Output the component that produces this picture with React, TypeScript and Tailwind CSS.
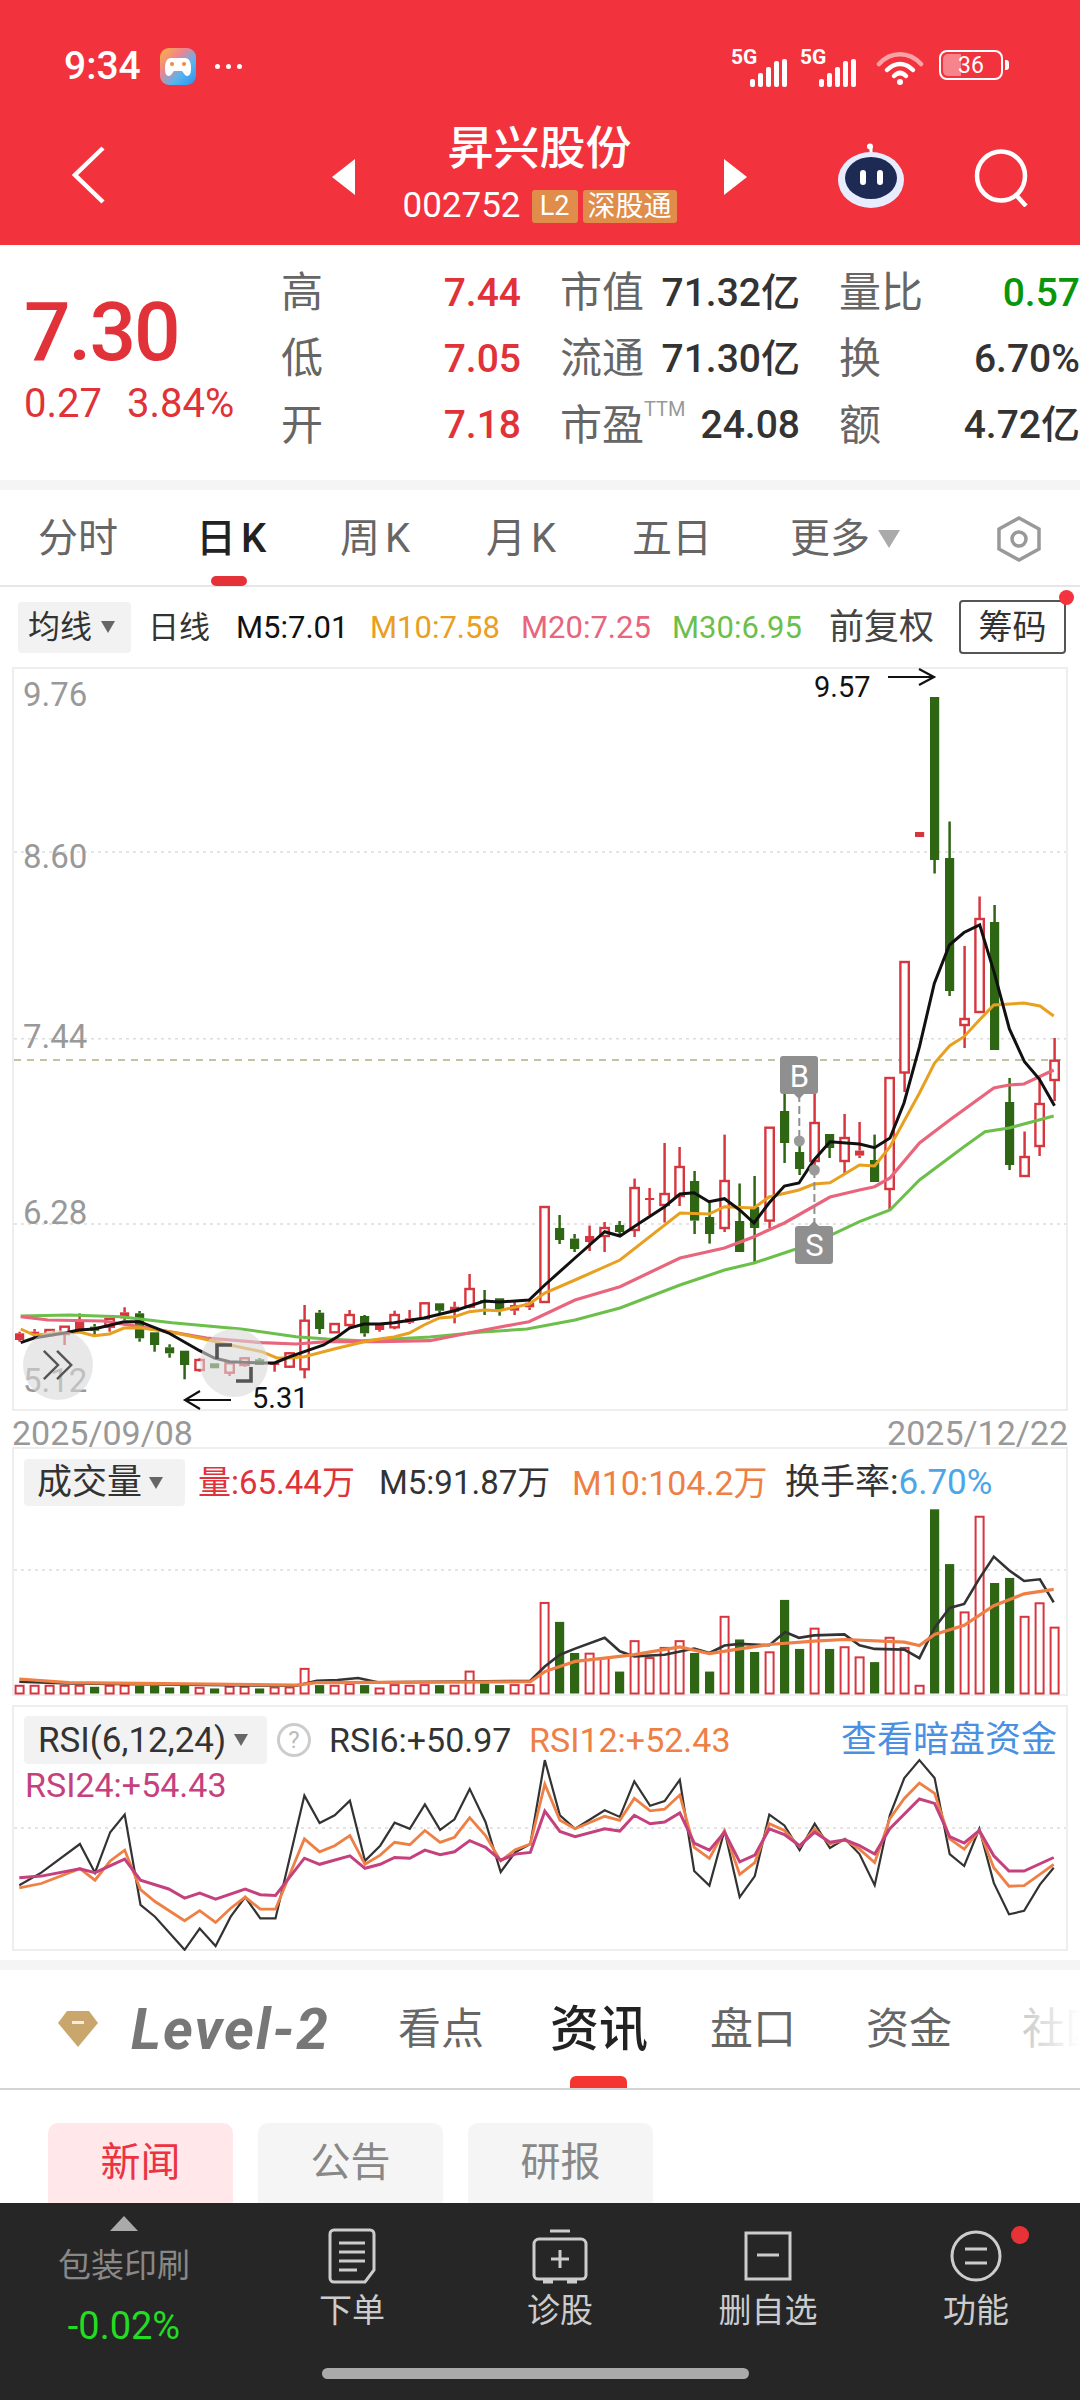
// daily K-line page of a stock app
type Candle = [string, number, number, number, number]

// type, high, body top, body bottom, low (page y)
const candles: Candle[] = [
  ['f', 1331.7, 1333.3, 1340, 1341.7], ['f', 1329, 1331.7, 1334.3, 1337.3], ['r', 1329.3, 1330, 1335, 1336], ['r', 1326.7, 1326.7, 1334, 1345],
  ['f', 1313.3, 1321.7, 1330, 1331.7], ['g', 1324, 1326.7, 1330.7, 1335], ['r', 1318.3, 1319, 1326.7, 1331.7], ['f', 1307.3, 1312.3, 1318.3, 1320],
  ['g', 1311, 1313.3, 1338.3, 1341.7], ['g', 1332.3, 1332.3, 1345, 1351.7], ['g', 1344.3, 1347.3, 1353.3, 1357.7], ['g', 1350.7, 1350.7, 1365, 1379.3],
  ['r', 1358.3, 1360, 1370, 1371.7], ['g', 1363.3, 1363.3, 1368.3, 1368.3], ['r', 1361.7, 1363.3, 1372.7, 1376], ['r', 1357, 1358.3, 1365, 1366.7],
  ['g', 1358, 1359.3, 1365, 1365], ['f', 1362.3, 1362.3, 1365, 1371.7], ['r', 1352.3, 1353.3, 1366.7, 1367.7], ['r', 1305, 1320.7, 1369.3, 1378.3],
  ['g', 1310, 1312.7, 1329, 1334], ['r', 1324, 1324, 1332.3, 1332.3], ['r', 1310, 1315, 1325, 1327.3], ['g', 1315, 1316, 1333.3, 1336.7],
  ['f', 1323.3, 1325, 1330, 1331.7], ['r', 1310.7, 1315, 1327.3, 1329.3], ['f', 1310, 1318.3, 1322.7, 1324], ['r', 1302.3, 1303.3, 1318.3, 1318.3],
  ['g', 1303.3, 1303.3, 1310.7, 1315], ['f', 1301.7, 1306.7, 1311.7, 1323.3], ['r', 1274, 1289, 1306.7, 1308.3], ['g', 1290, 1300.3, 1301.7, 1315],
  ['g', 1298.3, 1298.3, 1310.7, 1315.7], ['f', 1301.7, 1305, 1310.7, 1315], ['f', 1300, 1302.7, 1307.3, 1310], ['r', 1207, 1207, 1302, 1302],
  ['g', 1215, 1228, 1240, 1244], ['g', 1234, 1238.6, 1249, 1252], ['f', 1225.6, 1236, 1242, 1251], ['r', 1222, 1228, 1236, 1252],
  ['g', 1221, 1225, 1232, 1236], ['r', 1178.6, 1188, 1230, 1237], ['f', 1188, 1198, 1200, 1215], ['r', 1143, 1194, 1205, 1222.6],
  ['r', 1147, 1167, 1196, 1206], ['g', 1171, 1181, 1220.6, 1234], ['g', 1203, 1217, 1234, 1243.6], ['r', 1134.6, 1181, 1228, 1232],
  ['g', 1183.5, 1221, 1252, 1252], ['g', 1176, 1207, 1228, 1264], ['r', 1127.7, 1127.7, 1220.6, 1228], ['g', 1081, 1111, 1143, 1163],
  ['g', 1143, 1152, 1169, 1175], ['r', 1062, 1123, 1161, 1173], ['g', 1134, 1134, 1148, 1158], ['r', 1114, 1138, 1161, 1173],
  ['f', 1122, 1150.6, 1155.6, 1158], ['g', 1134.6, 1160, 1182, 1182], ['r', 1078, 1078, 1189, 1210], ['r', 962, 962, 1072.5, 1092],
  ['f', 832, 832, 837, 837], ['g', 697, 697, 860, 873.5], ['g', 821.5, 858, 991, 996], ['r', 946, 1019, 1025, 1048],
  ['r', 896.5, 919, 1012, 1012], ['g', 905, 922, 1050, 1050], ['g', 1078, 1102, 1165, 1170], ['r', 1131.5, 1157, 1176, 1176],
  ['r', 1078, 1104, 1146, 1156], ['r', 1038, 1060.7, 1080, 1101],
]

const m5 = '20.7,1342.7 34,1338 64.4,1333 79,1330 94,1329 124,1321.7 139.5,1321.7 168.7,1333 199.7,1350.7 214.5,1358 229.7,1361.7 261.7,1363 274.5,1363 289,1357 304.4,1351.7 323.7,1345 337.5,1336.7 349.5,1328 364,1324 379.5,1324 394,1322.7 424,1318 454.5,1310.7 484.5,1301 499,1302 529,1300 544.8,1285 575,1258 604.7,1231.7 620,1236 634,1226.7 664.6,1206.7 680,1194 694,1192.7 709,1201.7 724.5,1198.7 739.7,1210 754,1223 769,1203 784.4,1186 799,1183 814,1160 830,1141.7 859.5,1144 874.6,1147.7 890,1138 904,1103 919.5,1046.7 934.3,983.4 949.4,945 964,932.5 979.7,924.8 994.6,973.8 1009.4,1029 1024.5,1061.8 1039.3,1079 1054.5,1105.8'
const m10 = '20.7,1329 34,1335 64,1333 79.5,1332 94,1335.7 109.5,1334 124,1328 139.5,1327.7 169.4,1331.7 199.7,1338 229.7,1345 261.7,1351.7 277,1358 289,1358 304.4,1356.7 334,1349 364,1341.7 379.5,1339 394,1337 409.4,1333 424,1325 439.4,1318 454.5,1316.7 469.4,1311.7 484.5,1310 499,1310.7 529,1304 544.8,1293 575,1280 620,1260 680,1213 709,1214 724.5,1206.7 754,1208 769,1197 799,1190 814,1184 830,1182.7 859.5,1165 874.6,1166 890,1146.7 919.5,1093 934.6,1063 949.7,1045.7 964,1036.7 979.4,1020 993.8,1005 1024,1003 1040,1006 1053.7,1016'
const m20 = '20.7,1316.7 48,1320 103,1321 139.5,1326.7 168.7,1331.7 206.6,1338 261.7,1342.7 296,1344 327,1341.7 379,1341.7 430,1340.7 475,1331.7 516.5,1324 529,1321.7 575,1300 620,1286.7 680,1258 724.5,1248 754,1236.7 784.4,1223 830,1197 859.5,1190 874.6,1186.7 890,1178 919.5,1143 949.7,1120 993.8,1088 1009,1085 1024,1084 1053.7,1070'
const m30 = '20.7,1316 69,1315 120.5,1316.7 172,1322.7 241,1329 296,1336.7 327,1339 361.6,1340.7 430,1337 482,1332 527,1329 575,1320 620,1308 680,1285 724.5,1270 754,1263 814,1243 859.5,1221.7 890,1210 919.5,1180 964,1146.7 985,1131.7 1009,1128 1053.7,1116'

// volume tops, [r]ed or [g]reen
const vols: [string, number][] = [
  ['r', 727], ['r', 727], ['r', 727], ['r', 727], ['r', 727], ['g', 730], ['r', 727], ['r', 727], ['g', 727], ['g', 727],
  ['g', 732], ['g', 725], ['r', 733], ['g', 735], ['r', 730], ['r', 730], ['g', 735], ['r', 732], ['r', 732], ['r', 677],
  ['g', 725], ['r', 727], ['r', 722], ['g', 725], ['r', 735], ['r', 725], ['r', 727], ['r', 725], ['g', 725], ['r', 727],
  ['r', 685], ['g', 720], ['g', 725], ['r', 725], ['r', 725], ['r', 482], ['g', 538], ['g', 630], ['r', 632], ['r', 645],
  ['g', 685], ['r', 595], ['r', 645], ['r', 615], ['r', 595], ['g', 630], ['g', 685], ['r', 523], ['g', 590], ['g', 627],
  ['r', 628], ['g', 473], ['g', 618], ['r', 558], ['g', 618], ['r', 613], ['r', 643], ['g', 657], ['r', 585], ['r', 615],
  ['r', 727], ['g', 205], ['g', 367], ['r', 510], ['r', 227], ['g', 423], ['g', 408], ['r', 523], ['r', 483], ['r', 555],
]
const volLineA = '28:715 100:720 430:727 460:712 490:710 520:704 550:717 770:712 791:670 813:635 835:617 878:585 900:625 921:640 965:635 1008:617 1030:630 1052:608 1074:603 1117:607 1140:568 1160:585 1182:578 1226:575 1248:607 1270:618 1313:620 1335:645 1357:555 1379:497 1400:485 1422:410 1443:345 1465:385 1487:417 1510:412 1530:480'
const volLineB = '28:707 100:718 430:725 460:718 770:715 791:685 813:670 835:655 878:645 921:635 987:612 1030:632 1074:618 1117:605 1182:595 1226:590 1313:598 1335:608 1357:575 1400:548 1443:490 1487:455 1530:442'
const rsiA = '28:1317 60:1280 116:1195 138:1280 160:1160 181:1108 204:1375 225:1410 268:1508 290:1445 313:1497 335:1410 356:1352 378:1415 400:1415 442:1052 464:1133 486:1110 508:1067 530:1245 552:1200 573:1132 595:1150 617:1078 639:1153 660:1122 682:1032 705:1130 727:1278 748:1220 770:1195 791:947 813:1110 835:1150 878:1095 900:1115 921:1010 944:1082 965:1068 987:1005 1008:1275 1030:1318 1052:1155 1074:1352 1096:1290 1117:1108 1139:1140 1161:1213 1183:1135 1205:1207 1227:1180 1248:1225 1270:1317 1292:1110 1313:1000 1335:947 1357:1000 1379:1225 1400:1260 1422:1150 1443:1310 1465:1403 1487:1393 1510:1315 1530:1265'
const rsiB = '28:1325 60:1312 116:1268 138:1302 160:1245 181:1213 204:1330 225:1365 268:1422 290:1392 313:1427 335:1385 356:1352 378:1388 400:1388 442:1180 464:1218 486:1200 508:1170 530:1255 552:1228 573:1190 595:1197 617:1155 639:1190 660:1175 682:1117 705:1170 727:1245 748:1212 770:1195 791:1018 813:1125 835:1150 878:1113 900:1125 921:1060 944:1097 965:1092 987:1050 1008:1205 1030:1238 1052:1155 1074:1285 1096:1250 1117:1135 1139:1155 1161:1203 1183:1150 1205:1195 1227:1183 1248:1210 1270:1250 1292:1120 1313:1060 1335:1015 1357:1045 1379:1180 1400:1210 1422:1155 1443:1265 1465:1320 1487:1318 1510:1285 1530:1255'
const rsiC = '28:1295 60:1290 116:1268 138:1280 181:1240 204:1302 245:1328 268:1355 290:1340 313:1358 356:1328 378:1345 400:1347 442:1237 464:1255 508:1230 530:1267 552:1255 573:1235 595:1237 617:1213 639:1227 660:1218 682:1185 705:1205 727:1243 748:1225 770:1220 791:1098 813:1158 835:1173 878:1150 900:1157 921:1110 944:1135 965:1130 987:1103 1008:1192 1030:1213 1052:1160 1074:1248 1096:1228 1117:1150 1139:1167 1161:1200 1183:1160 1205:1190 1227:1183 1248:1200 1270:1225 1292:1150 1335:1062 1357:1075 1379:1173 1400:1192 1422:1155 1443:1230 1465:1275 1487:1275 1530:1235'

// lower panels were measured off a crop: x * 1.452, y * 2.958 from 1440
const toPage = (s: string) =>
  s.split(' ').map((p) => {
    const [x, y] = p.split(':').map(Number)
    return `${(x / 1.452).toFixed(1)},${(1440 + y / 2.958).toFixed(1)}`
  }).join(' ')

const RED = '#d8363f'
const GREEN = '#2f6614'
const cx = (i: number) => 19.6 + i * 15

function KLine() {
  return (
    <svg viewBox="12 667 1056 744" className="absolute inset-0 w-full h-full overflow-visible">
      {[852, 1038.7, 1224].map((y) => (
        <line key={y} x1="14" x2="1066" y1={y} y2={y} stroke="#dddddd" strokeWidth="1.5" strokeDasharray="3 4" />
      ))}
      <line x1="14" x2="1066" y1="1060" y2="1060" stroke="#b5ad85" strokeWidth="1.5" strokeDasharray="7 6" />
      {[['9.76', 706], ['8.60', 868], ['7.44', 1048], ['6.28', 1224], ['5.12', 1392]].map(([t, y]) => (
        <text key={t} x="23" y={y} fontSize="33" fill="#999999" fontFamily="Roboto">{t}</text>
      ))}
      {candles.map(([k, h, t, b, l], i) => {
        const c = k === 'g' ? GREEN : RED
        const x = cx(i)
        return (
          <g key={i}>
            <line x1={x} x2={x} y1={h} y2={t} stroke={c} strokeWidth="2.5" />
            <line x1={x} x2={x} y1={b} y2={l} stroke={c} strokeWidth="2.5" />
            {k === 'r' ? (
              <rect x={x - 4.2} y={t} width="8.4" height={Math.max(b - t, 2)} fill="#ffffff" stroke={c} strokeWidth="2.4" />
            ) : (
              <rect x={x - 4.6} y={t} width="9.2" height={Math.max(b - t, 2)} fill={c} />
            )}
          </g>
        )
      })}
      <polyline points={m30} fill="none" stroke="#6cbf4b" strokeWidth="3" />
      <polyline points={m20} fill="none" stroke="#e8657c" strokeWidth="3.2" />
      <polyline points={m10} fill="none" stroke="#e8a020" strokeWidth="3" />
      <polyline points={m5} fill="none" stroke="#111111" strokeWidth="3" />

      {/* B / S marks */}
      <line x1="799.3" x2="799.3" y1="1094" y2="1141" stroke="#8f8f8f" strokeWidth="2" strokeDasharray="8 4" />
      <circle cx="799.3" cy="1141" r="5.5" fill="#9a9a9a" />
      <path d="M783 1056h32a3 3 0 0 1 3 3v32a3 3 0 0 1-3 3h-11l-5 5-5-5h-11a3 3 0 0 1-3-3v-32a3 3 0 0 1 3-3z" fill="#8f8f8f" />
      <text x="799.3" y="1087" fontSize="31" fill="#ffffff" textAnchor="middle" fontFamily="Roboto">B</text>
      <line x1="814.4" x2="814.4" y1="1170" y2="1225" stroke="#8f8f8f" strokeWidth="2" strokeDasharray="8 4" />
      <circle cx="814.4" cy="1170" r="5.5" fill="#9a9a9a" />
      <path d="M798 1226h11l5-5 5 5h11a3 3 0 0 1 3 3v32a3 3 0 0 1-3 3h-32a3 3 0 0 1-3-3v-32a3 3 0 0 1 3-3z" fill="#8f8f8f" />
      <text x="814.4" y="1256" fontSize="31" fill="#ffffff" textAnchor="middle" fontFamily="Roboto">S</text>

      {/* high / low marks */}
      <text x="814" y="697" fontSize="29" fill="#111111" fontFamily="Roboto">9.57</text>
      <path d="M888 677h46m-15-8 15 8-15 8" fill="none" stroke="#111111" strokeWidth="2.2" />
      <text x="252" y="1408" fontSize="29" fill="#111111" fontFamily="Roboto">5.31</text>
      <path d="M231 1400h-46m15-9-15 9 15 9" fill="none" stroke="#111111" strokeWidth="2.2" />
    </svg>
  )
}

function Volume() {
  return (
    <svg viewBox="12 1447 1056 249" className="absolute inset-0 w-full h-full">
      <line x1="14" x2="1066" y1="1570" y2="1570" stroke="#dddddd" strokeWidth="1.5" strokeDasharray="3 4" />
      {vols.map(([k, top], i) => {
        const y = 1440 + top / 2.958
        const x = cx(i)
        return k === 'g' ? (
          <rect key={i} x={x - 4.6} y={y} width="9.2" height={1693.5 - y} fill={GREEN} />
        ) : (
          <rect key={i} x={x - 4} y={y} width="8" height={1693.5 - y} fill="#ffffff" stroke={RED} strokeWidth="2" />
        )
      })}
      <polyline points={toPage(volLineA)} fill="none" stroke="#333333" strokeWidth="2.6" />
      <polyline points={toPage(volLineB)} fill="none" stroke="#ee7f45" strokeWidth="3.2" />
    </svg>
  )
}

function Rsi() {
  return (
    <svg viewBox="12 1705 1056 246" className="absolute inset-0 w-full h-full">
      <line x1="14" x2="1066" y1="1828" y2="1828" stroke="#dddddd" strokeWidth="1.5" strokeDasharray="3 4" />
      <polyline points={toPage(rsiA)} fill="none" stroke="#333333" strokeWidth="2.2" />
      <polyline points={toPage(rsiB)} fill="none" stroke="#ee7f45" strokeWidth="2.8" />
      <polyline points={toPage(rsiC)} fill="none" stroke="#c4417e" strokeWidth="3" />
    </svg>
  )
}

function Caret({ className }: { className?: string }) {
  return <span className={`w-0 h-0 border-x-[7px] border-x-transparent border-t-[12px] border-t-[#666666] ${className ?? ''}`} />
}

function Signal({ className }: { className?: string }) {
  return (
    <div className={`relative w-[44px] h-[34px] flex items-end gap-[3px] ${className ?? ''}`}>
      {[8, 14, 20, 26, 28].map((h, i) => (
        <span key={i} className="w-[5px] rounded-[2px] bg-white" style={{ height: h }} />
      ))}
      <span className="absolute left-[-19px] top-[-6px] text-[21px] font-bold leading-none text-white">5G</span>
    </div>
  )
}

function StatusBar() {
  return (
    <div className="h-[132px] pt-[47px] pl-[64px] pr-[77px] flex items-start justify-between text-white">
      <div className="flex items-center h-[38px]">
        <span className="text-[39px] font-medium leading-none">9:34</span>
        <svg viewBox="0 0 36 37" className="ml-[19px] w-[36px] h-[37px]">
          <defs>
            <linearGradient id="app" x1="0" y1="0" x2="1" y2="1">
              <stop offset="0" stopColor="#f6b73c" />
              <stop offset=".35" stopColor="#f0848e" />
              <stop offset=".65" stopColor="#57b5ef" />
              <stop offset="1" stopColor="#2d8df0" />
            </linearGradient>
          </defs>
          <rect width="36" height="37" rx="9" fill="url(#app)" />
          <path d="M11 10h14c4 0 6 4 6 10 0 5-1 8-4 8-2 0-3-3-5-5h-8c-2 2-3 5-5 5-3 0-4-3-4-8 0-6 2-10 6-10z" fill="#ffffff" />
          <circle cx="12" cy="16" r="2" fill="#f08a3c" />
          <circle cx="24" cy="16" r="2" fill="#f08a3c" />
        </svg>
        <span className="ml-[19px] flex gap-[6px]">
          <i className="w-[5px] h-[5px] rounded-full bg-white" />
          <i className="w-[5px] h-[5px] rounded-full bg-white" />
          <i className="w-[5px] h-[5px] rounded-full bg-white" />
        </span>
      </div>
      <div className="flex items-start">
        <Signal className="mt-[6px]" />
        <Signal className="mt-[6px] ml-[25px]" />
        <svg viewBox="0 0 48 36" className="ml-[13px] mt-[2px] w-[48px] h-[36px]" fill="none" stroke="#ffffff" strokeLinecap="round">
          <path d="M3 15C15 2 33 2 45 15" strokeWidth="4.5" opacity=".55" />
          <path d="M11 21c8-8 18-8 26 0" strokeWidth="4.5" />
          <path d="M18 27c4-4 8-4 12 0" strokeWidth="4.5" />
          <circle cx="24" cy="33" r="1.5" strokeWidth="3" />
        </svg>
        <div className="ml-[15px] mt-[3px] w-[64px] h-[30px] rounded-[8px] border-2 border-white flex items-center justify-center relative">
          <span className="absolute left-[2px] top-[2px] bottom-[2px] w-[18px] rounded-l-[5px] bg-white/40" />
          <span className="relative text-[23px] leading-none">36</span>
          <span className="absolute right-[-8px] top-[8px] w-[4px] h-[10px] rounded-r-[3px] bg-white" />
        </div>
      </div>
    </div>
  )
}

function NavBar() {
  return (
    <div className="h-[113px] relative flex">
      <svg viewBox="0 0 33 58" className="ml-[72px] mt-[14px] w-[33px] h-[58px]" fill="none" stroke="#ffffff" strokeWidth="4.5">
        <path d="M31 2 3 29l28 27" />
      </svg>
      <span className="ml-[227px] mt-[27px] w-0 h-0 border-y-[18px] border-y-transparent border-r-[23px] border-r-white" />
      <div className="w-[369px] flex flex-col items-center">
        <span className="mt-[-14px] text-[46px] leading-[60px] font-medium text-white">昇兴股份</span>
        <div className="mt-[11px] flex items-center text-white">
          <span className="text-[35px] leading-[34px]">002752</span>
          <span className="ml-[11px] w-[46px] h-[33px] rounded-[3px] bg-[#e08d4b] text-[27px] leading-[33px] text-center">L2</span>
          <span className="ml-[5px] w-[94px] h-[33px] rounded-[3px] bg-[#e08d4b] text-[28px] leading-[33px] text-center">深股通</span>
        </div>
      </div>
      <span className="mt-[27px] w-0 h-0 border-y-[18px] border-y-transparent border-l-[23px] border-l-white" />
      <svg viewBox="0 0 70 66" className="ml-[89px] mt-[11px] w-[70px] h-[66px]">
        <path d="M35 10V4" stroke="#ffffff" strokeWidth="3" />
        <circle cx="34" cy="3.5" r="3" fill="#ffffff" />
        <ellipse cx="35" cy="37" rx="33" ry="28" fill="#e8ecff" />
        <ellipse cx="35" cy="35" rx="26" ry="21" fill="#1c2a54" />
        <rect x="24" y="27" width="6" height="15" rx="3" fill="#ffffff" />
        <rect x="41" y="27" width="6" height="15" rx="3" fill="#ffffff" />
      </svg>
      <svg viewBox="0 0 56 58" className="ml-[68px] mt-[17px] w-[56px] h-[58px]" fill="none" stroke="#ffffff" strokeWidth="4.5">
        <ellipse cx="27" cy="27" rx="24" ry="24.5" />
        <path d="m42 46 10 11" />
      </svg>
    </div>
  )
}

function Stat({ label, value, color, extra }: { label: string; value: string; color?: string; extra?: boolean }) {
  return (
    <div className="flex items-center justify-between whitespace-nowrap">
      <span className="text-[42px] leading-none text-[#666666]">
        {label}
        {extra && <sup className="text-[20px] align-[14px] text-[#999999]">TTM</sup>}
      </span>
      <span className={`text-[39px] leading-none font-medium ${color ?? 'text-[#333333]'}`}>{value}</span>
    </div>
  )
}

function Summary() {
  return (
    <div className="h-[235px] flex">
      <div className="w-[282px] pl-[24px] text-[#e03238]">
        <div className="mt-[37px] text-[82px] leading-[100px] font-medium tracking-[-2px]">7.30</div>
        <div className="flex text-[40px] leading-[44px]">
          <span className="w-[103px]">0.27</span>
          <span>3.84%</span>
        </div>
      </div>
      <div className="mt-[15px] w-[801px] h-[199px] grid grid-cols-[240px_240px_241px] gap-x-[39px] grid-rows-3">
        <Stat label="高" value="7.44" color="text-[#e03238]" />
        <Stat label="市值" value="71.32亿" />
        <Stat label="量比" value="0.57" color="text-[#0a960a]" />
        <Stat label="低" value="7.05" color="text-[#e03238]" />
        <Stat label="流通" value="71.30亿" />
        <Stat label="换" value="6.70%" />
        <Stat label="开" value="7.18" color="text-[#e03238]" />
        <Stat label="市盈" value="24.08" extra />
        <Stat label="额" value="4.72亿" />
      </div>
    </div>
  )
}

function PeriodTabs() {
  return (
    <div className="h-[97px] border-b-2 border-[#e6e6e6] relative flex">
      <div className="flex items-center h-[97px] text-[40px] leading-none text-[#666666] whitespace-nowrap">
        <span className="ml-[38px] w-[80px]">分时</span>
        <span className="ml-[78px] w-[68px] text-[#222222] font-medium">日<span className="ml-[5px]">K</span></span>
        <span className="ml-[76px] w-[72px]">周<span className="ml-[5px]">K</span></span>
        <span className="ml-[74px] w-[72px]">月<span className="ml-[5px]">K</span></span>
        <span className="ml-[74px] w-[80px]">五日</span>
        <span className="ml-[78px] w-[80px]">更多</span>
        <span className="ml-[8px] w-0 h-0 border-x-[11px] border-x-transparent border-t-[18px] border-t-[#aaaaaa]" />
        <svg viewBox="0 0 44 46" className="ml-[97px] w-[44px] h-[46px]" fill="none" stroke="#999999" strokeWidth="3.5">
          <path d="M22 2 42 13v20L22 44 2 33V13z" />
          <circle cx="22" cy="23" r="7" />
        </svg>
      </div>
      <span className="absolute left-[211px] bottom-[-1px] w-[36px] h-[10px] rounded-full bg-[#e53238]" />
    </div>
  )
}

function MaRow() {
  return (
    <div className="h-[80px] flex items-center text-[31px] leading-none whitespace-nowrap">
      <div className="ml-[18px] w-[113px] h-[51px] rounded-[4px] bg-[#f2f2f2] flex items-center pl-[10px] text-[#333333]">
        <span className="text-[32px]">均线</span>
        <Caret className="ml-[9px]" />
      </div>
      <span className="ml-[17px] text-[#333333]">日线</span>
      <span className="ml-[26px] w-[134px] text-[#111111]">M5:7.01</span>
      <span className="w-[151px] text-[#e8a020]">M10:7.58</span>
      <span className="w-[151px] text-[#e8657c]">M20:7.25</span>
      <span className="w-[157px] text-[#6cbf4b]">M30:6.95</span>
      <span className="w-[105px] text-[35px] text-[#444444]">前复权</span>
      <div className="relative ml-[25px] w-[107px] h-[54px] rounded-[4px] border-2 border-[#555555] flex items-center justify-center text-[34px] text-[#333333]">
        筹码
        <span className="absolute right-[-10px] top-[-12px] w-[15px] h-[15px] rounded-full bg-[#f5333f]" />
      </div>
    </div>
  )
}

function ChartSection() {
  return (
    <div className="relative mx-[12px] w-[1056px] h-[744px] ring-2 ring-inset ring-[#eeeeee]">
      <KLine />
      <div className="absolute left-[11px] top-[663px] w-[70px] h-[70px] rounded-full bg-[#d9d9d9]/60 flex items-center justify-center">
        <svg viewBox="0 0 36 36" className="w-[34px] h-[34px]" fill="none" stroke="#555555" strokeWidth="2.6">
          <path d="m3 3 15 15L3 33M17 3l15 15-15 15" />
        </svg>
      </div>
      <div className="absolute left-[188px] top-[662px] w-[68px] h-[68px] rounded-full bg-[#d9d9d9]/60 flex items-center justify-center">
        <svg viewBox="0 0 40 40" className="w-[40px] h-[40px]" fill="none" stroke="#555555" strokeWidth="3.6">
          <path d="M3 16V2h15M37 24v14H22" />
        </svg>
      </div>
    </div>
  )
}

function VolumeSection() {
  return (
    <div className="relative mx-[12px] w-[1056px] h-[249px] ring-2 ring-inset ring-[#eeeeee]">
      <Volume />
      <div className="relative pt-[12px] pl-[12px] flex items-center text-[33px] leading-none whitespace-nowrap">
        <div className="w-[161px] h-[47px] rounded-[4px] bg-[#f2f2f2] flex items-center pl-[13px] text-[#333333]">
          <span className="text-[35px]">成交量</span>
          <Caret className="ml-[7px]" />
        </div>
        <span className="ml-[13px] w-[181px] text-[#e03238]">量:65.44万</span>
        <span className="w-[193px] text-[#333333]">M5:91.87万</span>
        <span className="w-[213px] text-[34px] text-[#ee7f45]">M10:104.2万</span>
        <span className="text-[35px] text-[#333333]">换手率:</span>
        <span className="text-[35px] text-[#4ba6e8]">6.70%</span>
      </div>
    </div>
  )
}

function RsiSection() {
  return (
    <div className="relative mt-[9px] mx-[12px] w-[1056px] h-[246px] ring-2 ring-inset ring-[#eeeeee]">
      <Rsi />
      <div className="relative pt-[11px] pl-[12px] flex items-center text-[34px] leading-none whitespace-nowrap">
        <div className="w-[243px] h-[48px] rounded-[4px] bg-[#f2f2f2] flex items-center pl-[14px] text-[#333333]">
          <span className="text-[35px]">RSI(6,12,24)</span>
          <Caret className="ml-[8px]" />
        </div>
        <span className="ml-[10px] w-[34px] h-[34px] rounded-full border-[3px] border-[#cccccc] text-[24px] leading-[28px] text-center text-[#bbbbbb]">?</span>
        <span className="ml-[18px] w-[200px] text-[#333333]">RSI6:+50.97</span>
        <span className="w-[312px] text-[#ee7f45]">RSI12:+52.43</span>
        <span className="text-[36px] text-[#4a90e2]">查看暗盘资金</span>
      </div>
      <div className="relative mt-[2px] pl-[13px] text-[34px] leading-[38px] text-[#c4417e]">RSI24:+54.43</div>
    </div>
  )
}

function InfoTabs() {
  return (
    <div className="h-[120px] border-b-2 border-[#d4d4d4] relative flex items-center overflow-hidden whitespace-nowrap">
      <svg viewBox="0 0 40 36" className="shrink-0 ml-[58px] w-[40px] h-[36px]">
        <path d="M9 0h22l9 12-20 24L0 12z" fill="#c9a66b" />
        <rect x="14" y="10" width="12" height="3" fill="#ffffff" opacity=".8" />
      </svg>
      <span className="shrink-0 ml-[33px] w-[267px] text-[57px] leading-none font-bold italic tracking-[2px] text-[#777777]">Level-2</span>
      <span className="shrink-0 w-[152px] text-[43px] leading-none text-[#666666]">看点</span>
      <span className="shrink-0 w-[160px] text-[49px] leading-none font-medium text-[#222222]">资讯</span>
      <span className="shrink-0 w-[156px] text-[43px] leading-none text-[#666666]">盘口</span>
      <span className="shrink-0 w-[156px] text-[43px] leading-none text-[#666666]">资金</span>
      <span className="shrink-0 text-[43px] leading-none text-[#cccccc]">社区</span>
      <span className="absolute right-0 top-0 bottom-0 w-[56px] bg-gradient-to-r from-transparent to-white" />
      <span className="absolute left-[570px] bottom-0 w-[57px] h-[12px] rounded-t-[6px] bg-[#f43530]" />
    </div>
  )
}

function NewsChips() {
  return (
    <div className="pt-[33px] pl-[48px] flex gap-[25px] h-[113px] text-[40px] leading-none">
      <div className="w-[185px] h-[80px] rounded-t-[10px] bg-[#ffe7ea] text-[#ec3342] flex items-center justify-center">新闻</div>
      <div className="w-[185px] h-[80px] rounded-t-[10px] bg-[#f5f5f5] text-[#888888] flex items-center justify-center">公告</div>
      <div className="w-[185px] h-[80px] rounded-t-[10px] bg-[#f5f5f5] text-[#888888] flex items-center justify-center">研报</div>
    </div>
  )
}

function BottomAction({ label, icon }: { label: string; icon: React.ReactNode }) {
  return (
    <div className="flex flex-col items-center">
      <div className="relative h-[56px] mt-[25px] flex items-center">{icon}</div>
      <span className="mt-[10px] text-[33px] leading-none text-[#cccccc]">{label}</span>
    </div>
  )
}

function BottomBar() {
  return (
    <div className="relative h-[197px] bg-[#262626]">
      <div className="grid grid-cols-[248px_repeat(4,208px)]">
        <div className="flex flex-col items-center">
          <span className="mt-[13px] w-0 h-0 border-x-[14px] border-x-transparent border-b-[15px] border-b-[#aaaaaa]" />
          <span className="mt-[18px] text-[33px] leading-none text-[#888888]">包装印刷</span>
          <span className="mt-[25px] text-[38px] leading-none text-[#22dd22]">-0.02%</span>
        </div>
        <BottomAction label="下单" icon={
          <svg viewBox="0 0 48 56" className="w-[48px] h-[56px]" fill="none" stroke="#cccccc" strokeWidth="3">
            <path d="M6 2h36a4 4 0 0 1 4 4v36l-9 12H6a4 4 0 0 1-4-4V6a4 4 0 0 1 4-4zM11 15h26M11 24h26M11 33h26M11 42h18" />
          </svg>
        } />
        <BottomAction label="诊股" icon={
          <svg viewBox="0 0 56 56" className="w-[56px] h-[56px]" fill="none" stroke="#cccccc" strokeWidth="3">
            <path d="M18 3h20M7 11h42a5 5 0 0 1 5 5v31a4 4 0 0 1-4 4H6a4 4 0 0 1-4-4V16a5 5 0 0 1 5-5zM28 22v18M19 31h18M11 54h10M35 54h10" />
          </svg>
        } />
        <BottomAction label="删自选" icon={
          <svg viewBox="0 0 48 50" className="w-[48px] h-[50px]" fill="none" stroke="#cccccc" strokeWidth="3">
            <path d="M2 2h44v46H2zM13 24h22" />
          </svg>
        } />
        <BottomAction label="功能" icon={
          <>
            <svg viewBox="0 0 52 52" className="w-[52px] h-[52px]" fill="none" stroke="#cccccc" strokeWidth="3">
              <circle cx="26" cy="26" r="24" />
              <path d="M15 19h22M15 33h22" />
            </svg>
            <span className="absolute right-[-27px] top-[-2px] w-[18px] h-[18px] rounded-full bg-[#e93238]" />
          </>
        } />
      </div>
      <span className="absolute left-[322px] top-[165px] w-[427px] h-[11px] rounded-full bg-[#aaaaaa]" />
    </div>
  )
}

export default function App() {
  return (
    <div className="w-[1080px] h-[2400px] overflow-hidden bg-white font-['Roboto','Noto_Sans_CJK_SC',sans-serif]">
      <div className="bg-[#f2333d] h-[245px]">
        <StatusBar />
        <NavBar />
      </div>
      <Summary />
      <div className="h-[10px] bg-[#f5f5f5]" />
      <PeriodTabs />
      <MaRow />
      <ChartSection />
      <div className="h-[36px] px-[12px] pt-[8px] flex items-center justify-between text-[34px] leading-none text-[#999999]">
        <span>2025/09/08</span>
        <span>2025/12/22</span>
      </div>
      <VolumeSection />
      <RsiSection />
      <div className="h-[9px]" />
      <div className="h-[10px] bg-[#f5f5f5]" />
      <InfoTabs />
      <NewsChips />
      <BottomBar />
    </div>
  )
}
